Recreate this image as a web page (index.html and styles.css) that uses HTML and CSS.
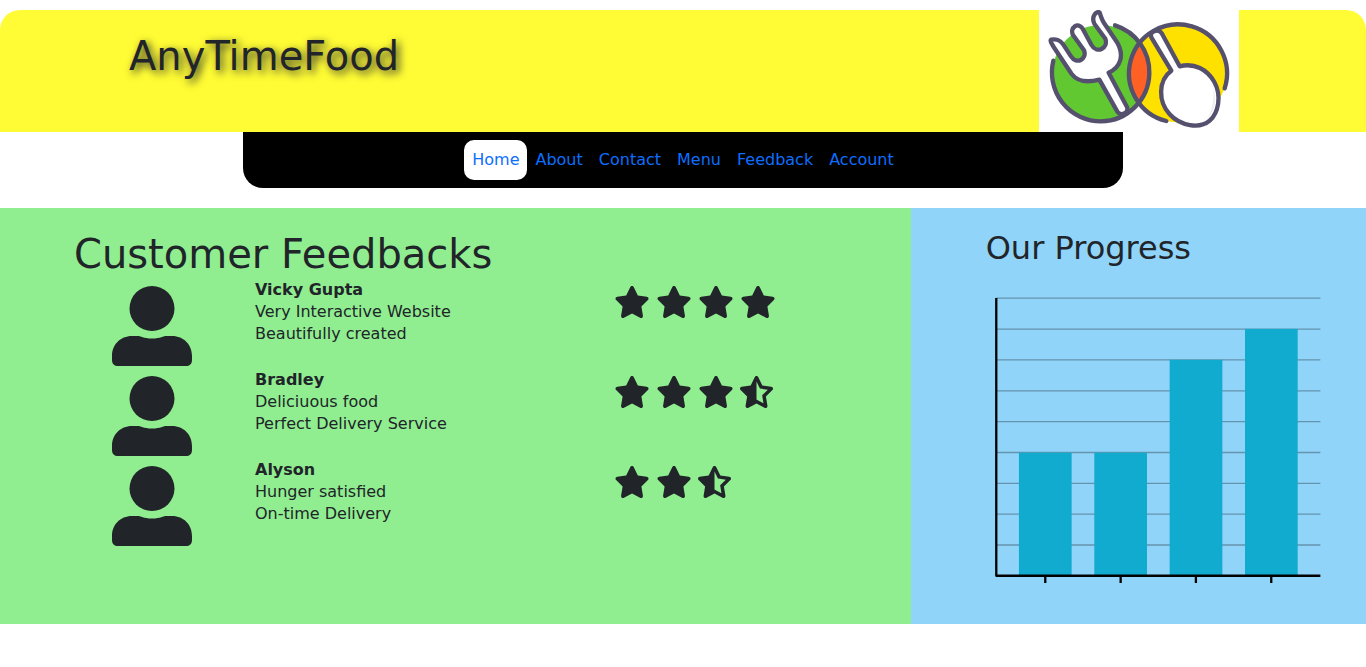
FILE: index.html
```html
<!DOCTYPE html>
<html lang="en">
<head>
<meta charset="utf-8">
<meta name="viewport" content="width=device-width, initial-scale=1">
<title>AnyTimeFood</title>
<link rel="stylesheet" href="styles.css">
</head>
<body>
<svg class="sprite" aria-hidden="true">
  <symbol id="person" viewBox="0 0 80 80">
    <circle cx="40" cy="22.5" r="22.5"/>
    <path d="M20 50h6c3 0 5 2.500 14 2.500s11-2.500 14-2.500H60c12 0 20 9 20 20v4c0 4-2.500 6-6 6H6c-3.500 0-6-2-6-6v-4c0-11 8-20 20-20z"/>
  </symbol>
  <symbol id="star" viewBox="0 0 576 512">
    <path d="M316.9 18C311.6 7 300.4 0 288.1 0s-23.4 7-28.8 18L195 150.300 51.400 171.500c-12 1.800-22 10.200-25.700 21.700s-.7 24.200 7.900 32.700L137.800 329 113.200 474.700c-2 12 3 24.200 12.900 31.300s23 8 33.800 2.300l128.300-68.500 128.300 68.500c10.800 5.700 23.900 4.900 33.800-2.300s14.900-19.300 12.900-31.300L438.500 329 542.700 225.900c8.600-8.500 11.700-21.200 7.900-32.700s-13.700-19.900-25.700-21.700L381.200 150.300 316.900 18z"/>
  </symbol>
  <symbol id="half" viewBox="56 0 544 512">
    <path d="M320 376.4l.1-.1 26.4 14.1 85.200 45.500-16.500-97.600-4.800-28.700 20.700-20.500 70.100-69.300-96.100-14.200-29.300-4.300-12.900-26.600L320.100 86.900l-.1 .3V376.400zm175.100 98.300c2 12-3 24.200-12.900 31.300s-23 8-33.800 2.300L320.100 439.800 191.800 508.300C181 514 167.900 513.100 158 506s-14.900-19.300-12.900-31.300L169.800 329 65.600 225.900c-8.600-8.500-11.700-21.200-7.900-32.700s13.700-19.900 25.700-21.700L227 150.300 291.400 18c5.400-11 16.500-18 28.800-18s23.400 7 28.800 18l64.300 132.300 143.600 21.200c12 1.800 22 10.200 25.700 21.700s.7 24.200-7.900 32.700L470.500 329l24.600 145.700z"/>
  </symbol>
</svg>

<header class="banner">
  <h1 class="brand">AnyTimeFood</h1>
  <svg class="logo" viewBox="27 30 600 366" role="img" aria-label="Fork and spoon logo">
    <rect x="27" y="30" width="600" height="366" fill="#fff"/>
    <circle cx="213" cy="220" r="145" fill="#62c832"/>
    <circle cx="443" cy="220" r="147" fill="#ffe100"/>
    <path d="M328 131Q263 220 328 309Q390 220 328 131z" fill="#ff6124"/>
    <g fill="none" stroke="#55506e" stroke-width="13" stroke-linecap="round" stroke-linejoin="round">
      <path d="M70 182A147 147 0 0 0 213 364A147 147 0 0 0 358 220A147 147 0 0 0 255 76"/>
      <path d="M409 363A147 147 0 1 1 584 265"/>
      <path fill="#fff" d="M63 119C78 116 93 122 100 134L123 169C140 195 172 178 162 151L129 105C118 83 145 64 158 86L184 134C200 163 236 145 226 116L193 71C182 48 202 30 209 38C213 51 216 60 222 69L260 125C284 165 273 201 236 218L291 321C298 338 272 351 262 335L208 239C185 245 148 252 125 222L71 141C65 130 58 123 63 119z"/>
      <path fill="#fff" d="M364 112C356 94 386 84 396 101L449 199C493 187 532 209 553 246C576 288 565 339 539 362C509 388 451 378 419 343C384 305 384 241 424 212z"/>
    </g>
    <path d="M547 255C562 294 557 331 533 352C549 323 555 291 547 255z" fill="#eeedf1"/>
  </svg>
</header>

<nav class="menu" aria-label="Main">
  <a class="link current" href="#home" aria-current="page">Home</a>
  <a class="link" href="#about">About</a>
  <a class="link" href="#contact">Contact</a>
  <a class="link" href="#menu">Menu</a>
  <a class="link" href="#feedback">Feedback</a>
  <a class="link" href="#account">Account</a>
</nav>

<main class="panels">
  <section class="feedbacks">
    <h2 class="title">Customer Feedbacks</h2>
    <article class="review">
      <svg class="avatar" aria-hidden="true"><use href="#person"/></svg>
      <div class="comment">
        <h3 class="name">Vicky Gupta</h3>
        <p>Very Interactive Website</p>
        <p>Beautifully created</p>
      </div>
      <div class="stars" role="img" aria-label="4 stars">
        <svg class="star"><use href="#star"/></svg>
        <svg class="star"><use href="#star"/></svg>
        <svg class="star"><use href="#star"/></svg>
        <svg class="star"><use href="#star"/></svg>
      </div>
    </article>
    <article class="review">
      <svg class="avatar" aria-hidden="true"><use href="#person"/></svg>
      <div class="comment">
        <h3 class="name">Bradley</h3>
        <p>Deliciuous food</p>
        <p>Perfect Delivery Service</p>
      </div>
      <div class="stars" role="img" aria-label="3.5 stars">
        <svg class="star"><use href="#star"/></svg>
        <svg class="star"><use href="#star"/></svg>
        <svg class="star"><use href="#star"/></svg>
        <svg class="star star-half"><use href="#half"/></svg>
      </div>
    </article>
    <article class="review">
      <svg class="avatar" aria-hidden="true"><use href="#person"/></svg>
      <div class="comment">
        <h3 class="name">Alyson</h3>
        <p>Hunger satisfied</p>
        <p>On-time Delivery</p>
      </div>
      <div class="stars" role="img" aria-label="2.5 stars">
        <svg class="star"><use href="#star"/></svg>
        <svg class="star"><use href="#star"/></svg>
        <svg class="star star-half"><use href="#half"/></svg>
      </div>
    </article>
  </section>

  <section class="progress">
    <h2 class="subtitle">Our Progress</h2>
    <svg class="chart" viewBox="985 288 346 304" role="img" aria-label="Bar chart of progress">
      <path d="M995 298.200h325M995 329.200h325M995 360.100h325M995 391h325M995 421.900h325M995 452.800h325M995 483.700h325M995 514.600h325M995 545.500h325" stroke="#000" stroke-opacity=".3" stroke-width="1.300"/>
      <g fill="#12abd0">
        <rect x="1018" y="453" width="52.800" height="123"/>
        <rect x="1093.500" y="453" width="52.800" height="123"/>
        <rect x="1169" y="360" width="52.800" height="216"/>
        <rect x="1244.500" y="329" width="52.800" height="247"/>
      </g>
      <path d="M995.300 298v278.300H1320M1044.400 577v6.500M1119.900 577v6.500M1195.300 577v6.500M1270.800 577v6.500" fill="none" stroke="#000" stroke-width="2.300" stroke-linejoin="round"/>
    </svg>
  </section>
</main>
</body>
</html>
```

FILE: styles.css
```css
* {
  box-sizing: border-box;
}

body {
  margin: 0;
  padding-top: 10px;
  background: #fff;
  color: #212529;
  font: 16px/22px Verdana, "DejaVu Sans", sans-serif;
}

h1,
h2,
h3,
p {
  margin: 0;
}

.sprite {
  position: absolute;
  width: 0;
  height: 0;
}

.banner {
  display: flex;
  justify-content: space-between;
  align-items: flex-start;
  padding: 0 127px 0 129px;
  background: #fffc35;
  border-radius: 20px 20px 0 0;
}

.brand {
  padding-top: 22px;
  font-size: 40px;
  line-height: 48px;
  font-weight: 400;
  text-shadow: 3px 3px 8px #212529;
}

.logo {
  display: block;
  width: 200px;
  height: 122px;
}

.menu {
  display: flex;
  justify-content: center;
  max-width: 880px;
  margin: 0 auto 20px;
  padding: 8px;
  background: #000;
  border-radius: 0 0 20px 20px;
}

.link {
  padding: 8px;
  border-radius: 10px;
  color: #0d6efd;
  line-height: 24px;
  text-decoration: none;
}

.current {
  background: #fff;
}

.panels {
  display: grid;
  grid-template-columns: 2fr 1fr;
}

.feedbacks {
  padding: 22px 74px 76px;
  background: #90ee90;
}

.title {
  font-size: 40px;
  line-height: 48px;
  font-weight: 400;
}

.review {
  display: grid;
  grid-template-columns: 181px 359px auto;
  justify-content: start;
  align-items: start;
  min-height: 90px;
}

.comment {
  padding-top: 1px;
}

.avatar {
  width: 80px;
  height: 80px;
  margin: 8px 0 0 38px;
  fill: currentColor;
}

.name {
  font-size: 16px;
  line-height: 22px;
  font-weight: 700;
}

.stars {
  display: flex;
  gap: 6px;
  padding-top: 8px;
}

.star {
  width: 36px;
  height: 32px;
  fill: currentColor;
}

.star-half {
  width: 34px;
}

.progress {
  padding: 20px 35px 32px 75px;
  background: #90d4f9;
}

.subtitle {
  margin-bottom: 20px;
  font-size: 32px;
  line-height: 40px;
  font-weight: 400;
}

.chart {
  display: block;
  width: 100%;
}
```
